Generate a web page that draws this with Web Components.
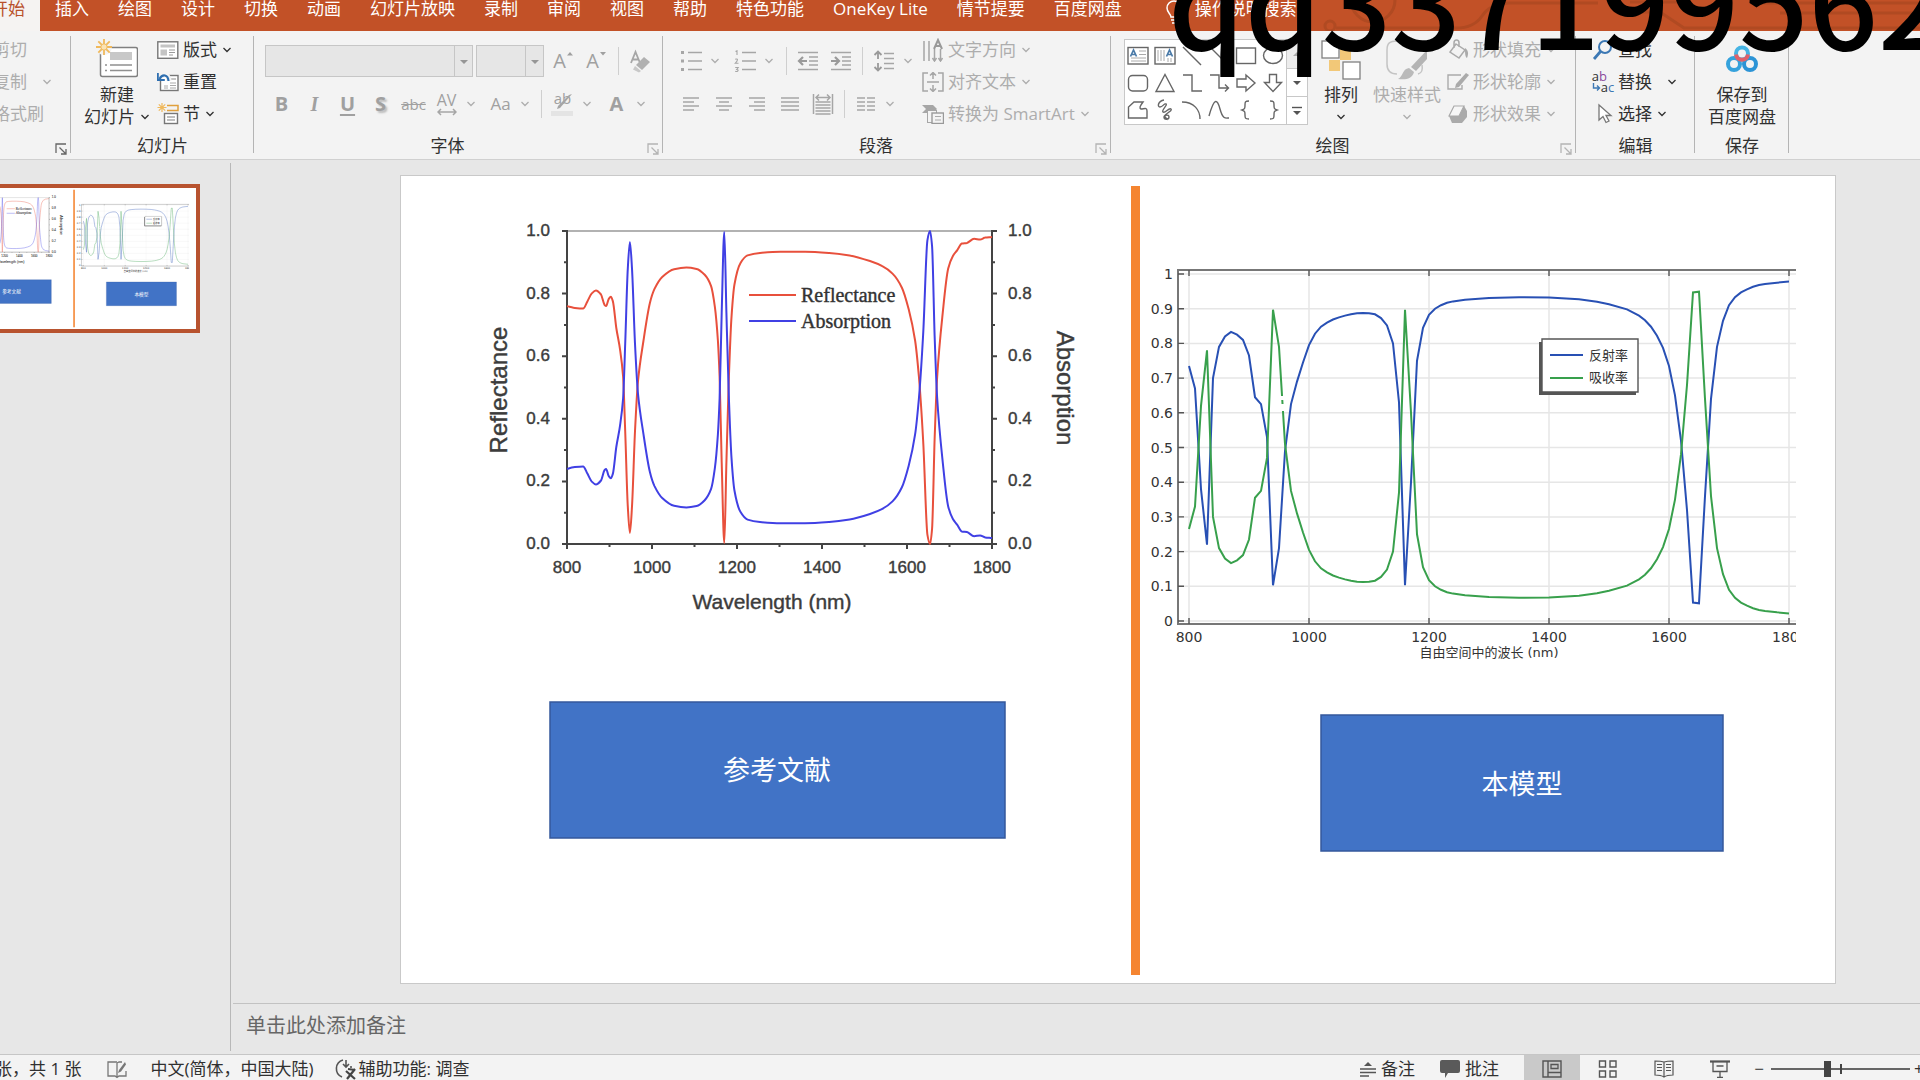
<!DOCTYPE html>
<html lang="zh-CN">
<head>
<meta charset="utf-8">
<title>演示文稿</title>
<style>
  html, body { margin: 0; height: 100%; }
  body {
    overflow: hidden;
    background: #e7e7e7;
    color: #303030;
    font: 17px/22px "Open Sans", "Noto Sans CJK SC", sans-serif;
  }
</style>
</head>
<body>
<slide-editor></slide-editor>

<script>
function define(name, html, setup) {
  const template = document.createElement('template');
  template.innerHTML = html;
  customElements.define(name, class extends HTMLElement {
    constructor() {
      super();
      this.attachShadow({ mode: 'open' }).append(template.content.cloneNode(true));
    }
    connectedCallback() {
      if (setup && !this.ready) { this.ready = true; setup(this, this.shadowRoot); }
    }
  });
}

/* ---------- icons: [width, height, drawing] ---------- */
const G = 'fill="none" stroke="#a6a6a6" stroke-width="1.5"';
const D = 'fill="none" stroke="#666" stroke-width="1.4"';
const icons = {
  chevron: [10, 8, '<path d="M1.5 2 5 5.5 8.500 2" fill="none" stroke="currentColor" stroke-width="1.300"/>'],
  launcher: [12, 12, '<path d="M1 10V1h10M4.500 4.500l6 6M11 6v5H6" fill="none" stroke="currentColor" stroke-width="1.300"/>'],
  newslide: [42, 42, '<rect x="4.500" y="9.500" width="37" height="29" rx="2" fill="#fff" stroke="#808080" stroke-width="1.500"/><rect x="14" y="14" width="22" height="8" fill="#c8c8c8"/><path d="M14 27h22M14 32.500h22M9 27h2M9 32.500h2" stroke="#909090" stroke-width="1.500"/><circle cx="8" cy="9" r="8" fill="#f3f3f3"/><path d="M8 1v16M0 9h16M2.300 3.300l11.400 11.400M13.700 3.300 2.300 14.700" stroke="#f0b95c" stroke-width="1.800"/><circle cx="8" cy="9" r="3.200" fill="#fbe3b4" stroke="#f0b95c"/>'],
  layout: [22, 20, '<rect x=".8" y="1.800" width="20" height="16.500" fill="#fff" stroke="#777" stroke-width="1.400"/><rect x="3.500" y="4.500" width="14.500" height="3" fill="#c4c4c4"/><rect x="3.500" y="9.500" width="6.500" height="6" fill="#c4c4c4"/><path d="M12 10h6M12 12.500h6M12 15h4" stroke="#9a9a9a"/>'],
  reset: [22, 20, '<rect x="3.500" y="3.500" width="17.500" height="15" fill="#fff" stroke="#777" stroke-width="1.400"/><rect x="11" y="6" width="8" height="2" fill="#c4c4c4"/><path d="M7 14h4M7 16h4M13 11h6M13 13.500h6M13 16h6" stroke="#aaa"/><path d="M2 7.500C5 .8 11.500 1.500 12 9" fill="none" stroke="#f3f3f3" stroke-width="5"/><path d="M2.500 7C5.500 1.500 11 2.500 11.500 9" fill="none" stroke="#2f6fb0" stroke-width="2.200"/><path d="M.8 1v7h7" fill="none" stroke="#2f6fb0" stroke-width="2"/>'],
  section: [22, 22, '<path d="M5 0v9M.5 4.500h9M1.800 1.300l6.400 6.400M8.200 1.300 1.800 7.700" stroke="#f0b95c" stroke-width="1.200"/><path d="M10 2.500h11v5H10" fill="none" stroke="#e0a03c" stroke-width="1.500"/><rect x="7.500" y="10.500" width="13" height="10" fill="#fff" stroke="#777" stroke-width="1.400"/><path d="M10 14h8M10 17h8" stroke="#aaa" stroke-width="1.500"/>'],
  bullets: [22, 22, `<path d="M8 2.500h14M8 11h14M8 19.500h14" ${G}/><path d="M1 1h3v3H1zM1 9.500h3v3H1zM1 18h3v3H1z" fill="#a6a6a6"/>`],
  numbers: [22, 22, `<path d="M8 2.500h14M8 11h14M8 19.500h14" ${G}/><path d="M1.500 1.500 3 .8v4.200M1.200 9.300c2.500-1 3.500.3 0 4h3.300M1.200 17.500h3l-1.500 2c2.500 0 1.500 2.800-1.500 1.800" fill="none" stroke="#a6a6a6" stroke-width="1.100"/>`],
  outdent: [22, 20, `<path d="M1 1.500h20M12 6h9M12 10h9M12 14h9M1 18.500h20" ${G}/><path d="M10 10H2M6 6l-4 4 4 4" fill="none" stroke="#9a9a9a" stroke-width="2.200"/>`],
  indent: [22, 20, `<path d="M1 1.500h20M12 6h9M12 10h9M12 14h9M1 18.500h20" ${G}/><path d="M1 10h8M5 6l4 4-4 4" fill="none" stroke="#9a9a9a" stroke-width="2.200"/>`],
  spacing: [22, 22, `<path d="M11 3.500h10M11 8.500h10M11 13.500h10M11 18.500h10" ${G}/><path d="M5 2v7M5 13v7M1.500 5 5 1.500 8.500 5M1.500 17 5 20.500 8.500 17" fill="none" stroke="#9a9a9a" stroke-width="1.800"/>`],
  left: [18, 16, `<path d="M1 2h16M1 6h11M1 10h16M1 14h11" ${G}/>`],
  center: [18, 16, `<path d="M1 2h16M4 6h10M1 10h16M4 14h10" ${G}/>`],
  right: [18, 16, `<path d="M1 2h16M6 6h11M1 10h16M6 14h11" ${G}/>`],
  justify: [20, 16, `<path d="M1 2h18M1 6h18M1 10h18M1 14h18" ${G}/>`],
  distribute: [22, 22, `<path d="M1.500 1v20M20.500 1v20M3.500 9h15M3.500 12h15M3.500 15h15M3.500 18h15M3.500 21h15" ${G}/><path d="M4 4.500h14M7 1.500l-3 3 3 3M15 1.500l3 3-3 3" ${G}/>`],
  columns: [20, 16, `<path d="M1 2h8M11 2h8M1 6h8M11 6h8M1 10h8M11 10h8M1 14h8M11 14h8" ${G}/>`],
  textdir: [22, 24, `<path d="M2 3v20M7 3v20M12.500 11v12M18.500 11v12" ${G}/><path d="M12 11 16 2l4 9M13.500 8h5" fill="none" stroke="#999" stroke-width="2"/><path d="M10.500 20l2 3 2-3M16.500 20l2 3 2-3" ${G}/>`],
  aligntext: [22, 20, `<path d="M6 1H1v18h5M16 1h5v18h-5M5 10h12M11 0v7M11 13v7M8 3.500l3-3 3 3M8 16.500l3 3 3-3" ${G}/>`],
  smartart: [22, 20, `<path d="M0 1h11l4 4-4 4H0l4-4z" fill="#a6a6a6"/><rect x="5.500" y="6.500" width="9" height="12" fill="#f3f3f3" stroke="#a6a6a6"/><rect x="10" y="9" width="11.500" height="10.500" fill="#f3f3f3" stroke="#999" stroke-width="1.400"/><path d="M13 12.500h6M13 16h6" stroke="#aaa"/>`],
  eraser: [22, 24, '<path d="M2 14 6.500 3 11 14M3.500 10.500h6" fill="none" stroke="#a6a6a6" stroke-width="1.800"/><path d="M7 16 15 8l6 5-8 8z" fill="#b0b0b0"/><path d="M6 17l6 5-2 1.500-6-3z" fill="#c8c8c8"/>'],
  highlight: [24, 26, '<path d="M21 3 9 17l-3 1 1-3L18 4z" fill="#a6a6a6"/><rect x="0" y="20" width="22" height="5" fill="#e4e4e4"/>'],
  arrows: [20, 8, `<path d="M1 4h18M4 1 1 4l3 3M16 1l3 3-3 3" ${G}/>`],
  grow: [8, 6, '<path d="M1 4.500 4 1l3 3.500z" fill="#a0a0a0"/>'],
  shrink: [8, 6, '<path d="M1 1h6L4 4.500z" fill="#a0a0a0"/>'],
  bulb: [16, 24, '<path d="M5 17c0-3-4-4.500-4-9a7 7 0 0 1 14 0c0 4.500-4 6-4 9zM5 20h6M6 23h4" fill="none" stroke="#fff" stroke-width="1.500"/>'],
  textbox: [22, 20, `<rect x="1" y="1.500" width="20" height="16.500" ${D}/><path d="M3.500 10.500 6.500 4l3 6.500M4.500 8.500h4" fill="none" stroke="#4a7aa8" stroke-width="1.700"/><path d="M12 5h7M12 8.500h7M4 12h15M4 15h15" stroke="#aaa"/>`],
  vtextbox: [22, 20, `<rect x="1" y="1.500" width="20" height="16.500" ${D}/><path d="M12.500 10.500l3-6.500 3 6.500M13.500 8.500h4" fill="none" stroke="#4a7aa8" stroke-width="1.700"/><path d="M4 4v11M7 4v11M10 4v11M14 12v4M17 12v4" stroke="#aaa"/>`],
  line: [22, 22, `<path d="M2 2l18 18" ${D}/>`],
  arrowline: [22, 22, `<path d="M2 2l18 18M20 13v7h-7" ${D}/>`],
  square: [22, 20, `<rect x="1.500" y="2" width="19" height="15.500" ${D}/>`],
  oval: [22, 20, `<ellipse cx="11" cy="9.500" rx="9.500" ry="8" ${D}/>`],
  rounded: [22, 20, `<rect x="1.500" y="2.500" width="19" height="15.500" rx="4" ${D}/>`],
  triangle: [22, 20, `<path d="M11 1.500 20 18.500H2z" ${D}/>`],
  elbow: [22, 20, `<path d="M2 2h9v16h10" ${D}/>`],
  elbowarrow: [22, 20, `<path d="M2 2h9v13h9M17 11.500l3.500 3.500-3.500 3.500" ${D}/>`],
  rarrow: [22, 20, `<path d="M2 6h9V2l9 8-9 8v-4H2z" ${D}/>`],
  darrow: [22, 20, `<path d="M7.500 1.500h7v8h5L11 18.500 2.500 9.500h5z" ${D}/>`],
  freeform: [22, 20, `<path d="M1.500 18V7L7 2h9c-3 4-4 6-2 7 3 0 6-2 6 2v7z" ${D}/>`],
  scribble: [22, 22, `<path d="M10 1C4 2 3 8 6 8s4-4 6-3-5 6-3 8 6-5 8-3-7 5-7 8 5 3 5 0-5-2-4 0 3 1 2 3" ${D}/>`],
  arc: [22, 20, `<path d="M1 2c12 0 18 8 18 17" ${D}/>`],
  curve: [22, 20, `<path d="M1 16C6-2 9-2 12 9s6 9 9 9" ${D}/>`],
  lbrace: [22, 20, `<path d="M14 1c-4 0-4 1-4 4s0 4-3 5c3 1 3 2 3 5s0 4 4 4" ${D}/>`],
  rbrace: [22, 20, `<path d="M8 1c4 0 4 1 4 4s0 4 3 5c-3 1-3 2-3 5s0 4-4 4" ${D}/>`],
  down: [10, 6, '<path d="M1 1h8L5 5z" fill="#555"/>'],
  up: [10, 6, '<path d="M1 5h8L5 1z" fill="#aaa"/>'],
  more: [10, 10, '<path d="M0 1.500h10" stroke="#555" stroke-width="1.400"/><path d="M1 5h8L5 9z" fill="#555"/>'],
  arrange: [42, 42, '<path d="M20 11h11v11H20zM9 22h11v11H9z" fill="#f2c878"/><rect x="2" y="3" width="17" height="17" fill="#fff" stroke="#808080" stroke-width="1.300"/><rect x="23" y="24" width="17" height="17" fill="#fff" stroke="#808080" stroke-width="1.300"/>'],
  styles: [44, 42, '<path d="M12 36c-7 0-10-4-10-10V12C2 5 5 3 12 3h16c6 0 9 2 10 6" fill="none" stroke="#c4c4c4" stroke-width="1.500"/><path d="M42 12v9L31 33l-5-4z" fill="#b4b4b4"/><path d="M24 30l5 4c-2 7-8 8-16 7 5-2 4-10 11-11z" fill="#bababa"/><path d="M33 36c4-1 5-4 4-9" fill="none" stroke="#c4c4c4" stroke-width="1.500"/>'],
  fill: [22, 22, '<path d="M9 5 18 11l-6 8-9-6zM7 9V4c0-4 5-4 5 0v4" fill="none" stroke="#aaa" stroke-width="1.500"/><path d="M18 9c3 2 4 5 2 10-2-1-2-5-2-10z" fill="#aaa"/>'],
  outline: [22, 20, '<path d="M14 3H1v14h14v-4" fill="none" stroke="#aaa" stroke-width="1.400"/><path d="M19 1l3 2-10 12-4 1 1-4z" fill="#aaa"/>'],
  effects: [22, 20, '<path d="M2 12 7 2h10l3 5v6l-5 6H5z" fill="#aaa"/><path d="M2 12 7 2h10l-5 10z" fill="#f6f6f6" stroke="#aaa" stroke-width="1.200"/>'],
  find: [22, 22, '<circle cx="13" cy="8" r="6" fill="none" stroke="#3c78b4" stroke-width="2"/><path d="M8.500 12.500 2 20" stroke="#3c78b4" stroke-width="2.800"/>'],
  replace: [9, 12, '<path d="M1.500 1v5h6M5 3.500 7.500 6 5 8.500" fill="none" stroke="#3c78b4" stroke-width="1.400"/>'],
  select: [22, 22, '<path d="M7 2v15l4-3.500 3 6 3-1.500-3-5.500h5z" fill="#fff" stroke="#777" stroke-width="1.300"/>'],
  netdisk: [32, 28, '<circle cx="8" cy="19" r="6" fill="none" stroke="#35a2dc" stroke-width="4"/><circle cx="24" cy="19" r="6" fill="none" stroke="#2c94d6" stroke-width="4"/><circle cx="16" cy="8.500" r="6" fill="none" stroke="#46b4e4" stroke-width="4"/><path d="M10 9.500c1 7 11 7 12 0" fill="none" stroke="#e0616a" stroke-width="4"/>'],
  proof: [20, 20, '<path d="M10 4v14M10 3H1v14h7l2 1.500 2-1.500h7v-5M10 4l2-1h3" fill="none" stroke="#777" stroke-width="1.300"/><path d="M18 3 12 11l-1 3 3-1.500 5-7z" fill="#777"/>'],
  access: [22, 22, '<path d="M8 2a9 9 0 0 0-1 17M11 2v6M8 6l3 3 3-3M16 8v2" fill="none" stroke="#555" stroke-width="1.600"/><path d="M11 13l9 8M20 11l-8 10M13 11l7 1" stroke="#444" stroke-width="2.200"/>'],
  notes: [16, 16, '<path d="M4 5h8L8 1z" fill="#555"/><path d="M0 8h16M0 11.500h16M0 15h9" stroke="#555" stroke-width="1.300"/>'],
  comment: [20, 18, '<path d="M2 0h16q2 0 2 2v9q0 2-2 2H8l-3 5v-5H2q-2 0-2-2V2q0-2 2-2z" fill="#5a5a5a"/>'],
  normal: [20, 18, '<path d="M1 1h18v16H1zM6 1v16M6 12.500h13" fill="none" stroke="#555" stroke-width="1.400"/><path d="M9 4.500h7v4H9z" fill="none" stroke="#555" stroke-width="1.300"/>'],
  sorter: [20, 18, '<path d="M1.500 1h6v6h-6zM12 1h6v6h-6zM1.500 11h6v6h-6zM12 11h6v6h-6z" fill="none" stroke="#555" stroke-width="1.400"/>'],
  reading: [20, 18, '<path d="M10 2v15M10 2C7 1 4 1 1 1v14c3 0 6 0 9 2 3-2 6-2 9-2V1c-3 0-6 0-9 1M3 4.500h5M3 7.500h5M3 10.500h5M12 4.500h5M12 7.500h5M12 10.500h5" fill="none" stroke="#555" stroke-width="1.200"/>'],
  show: [20, 18, '<path d="M0 1.500h20" stroke="#555" stroke-width="2.200"/><path d="M3 2v9.500h14V2M6.500 6h7M10 12v5M7 17.500h6" fill="none" stroke="#555" stroke-width="1.300"/>']
};
define('ui-icon', `<style>:host{display:block;flex:none}svg{display:block}</style>`, (el, root) => {
  const [w, h, art] = icons[el.getAttribute('name')];
  root.innerHTML += `<svg width="${w}" height="${h}" viewBox="0 0 ${w} ${h}" aria-hidden="true">${art}</svg>`;
});

/* ---------- title tabs ---------- */
define('ribbon-tabs', `
<style>
  :host { display: block; background: #c25127; height: 31px; overflow: hidden; position: relative; }
  .decor { position: absolute; right: 0; top: 0; }
  nav { display: flex; position: relative; }
  button { border: 0; background: none; color: #fff; font: inherit; line-height: 18px; height: 31px; padding: 0 0 13px; margin: 0 0 0 29px; white-space: nowrap; flex: none; }
  .on { background: #f5f3f2; color: #b9512b; margin: 0 -14px 0 -24px; padding: 0 15px 13px; }
  .ask { display: flex; gap: 13px; margin-left: 44px; }
</style>
<svg class="decor" width="620" height="31" fill="none" stroke="#b04a22" stroke-width="3" aria-hidden="true">
  <circle cx="73" cy="0" r="22"/><circle cx="30" cy="26" r="5"/><path d="M36 28h120q18 0 26-12t26-13h90M330 2h60M330 12h30l24 16h236M460 3h160M480 13h140"/>
</svg>
<nav>
  <button class="on">开始</button><button>插入</button><button>绘图</button><button>设计</button><button>切换</button><button>动画</button><button>幻灯片放映</button><button>录制</button><button>审阅</button><button>视图</button><button>帮助</button><button>特色功能</button><button>OneKey Lite</button><button>情节提要</button><button>百度网盘</button><button class="ask"><ui-icon name="bulb"></ui-icon>操作说明搜索</button>
</nav>`);

/* ---------- ribbon pieces ---------- */
define('ribbon-group', `
<style>
  :host { display: flex; flex-direction: column; flex: none; box-sizing: border-box; height: 128px; padding-top: 3px;
    background: linear-gradient(#b4b4b4, #b4b4b4) right 5px / 1px 117px no-repeat; }
  .body { flex: 1; display: flex; align-items: flex-start; padding-left: var(--lead, 10px); }
  footer { display: flex; align-items: center; height: 26px; }
  span { flex: 1; text-align: center; white-space: nowrap; }
  button { border: 0; background: none; padding: 5px 4px 0 6px; color: #666; }
  button:disabled { color: #b4b4b4; }
</style>
<div class="body"><slot></slot></div>
<footer><span></span></footer>`, (el, root) => {
  root.querySelector('span').textContent = el.getAttribute('label');
  const launch = el.getAttribute('launcher');
  if (launch !== null) {
    const b = document.createElement('button');
    b.disabled = launch === 'off';
    b.setAttribute('aria-label', '更多选项');
    b.innerHTML = '<ui-icon name="launcher"></ui-icon>';
    root.querySelector('footer').append(b);
  }
});

/* icon left, label right, 32px row */
define('tool-row', `
<style>
  :host { display: block; }
  button { display: flex; align-items: center; gap: 4px; height: 32px; padding: 0; border: 0; background: none; font: inherit; color: #303030; white-space: nowrap; }
  :host([off]) button { color: #adadad; }
  .pic { width: 22px; display: flex; justify-content: center; }
  .pic:empty { display: none; }
  .chev { margin-left: 1px; }
  :host([wide]) .chev { margin-left: 11px; }
</style>
<button><span class="pic"></span><slot></slot></button>`, (el, root) => {
  const b = root.querySelector('button'), n = el.getAttribute('icon');
  b.disabled = el.hasAttribute('off');
  if (n === 'replace') root.querySelector('.pic').innerHTML = '<replace-mark></replace-mark>';
  else if (n) root.querySelector('.pic').innerHTML = `<ui-icon name="${n}"></ui-icon>`;
  if (el.hasAttribute('menu')) b.insertAdjacentHTML('beforeend', '<ui-icon class="chev" name="chevron"></ui-icon>');
});
define('replace-mark', `
<style>
  :host { display: grid; font-size: 13px; line-height: 11px; }
  b { font-weight: 400; color: #8a4a9c; } i { font-style: normal; color: #3c78b4; }
  div { display: flex; }
</style>
<div>a<b>b</b></div><div><ui-icon name="replace"></ui-icon>a<i>c</i></div>`);

/* large icon over one or two label lines */
define('tool-big', `
<style>
  :host { display: block; }
  button { display: flex; flex-direction: column; align-items: center; min-width: 52px; padding: 0; border: 0; background: none; font: inherit; color: #303030; white-space: nowrap; }
  :host([off]) button { color: #adadad; }
  .pic { height: 50px; display: flex; align-items: center; }
  .line { display: flex; align-items: center; min-height: 22px; gap: 5px; }
</style>
<button><span class="pic"></span><span class="line"><slot></slot></span><span class="line second"></span></button>`, (el, root) => {
  root.querySelector('button').disabled = el.hasAttribute('off');
  root.querySelector('.pic').innerHTML = `<ui-icon name="${el.getAttribute('icon')}"></ui-icon>`;
  root.querySelector('.second').innerHTML = (el.getAttribute('second') || '') +
    (el.hasAttribute('menu') ? '<ui-icon name="chevron"></ui-icon>' : '');
});

/* compact, disabled button with only a glyph or icon */
define('tool-glyph', `
<style>
  :host { display: flex; flex: none; }
  button { width: 33px; height: 32px; padding: 0; border: 0; background: none; display: grid; place-content: center; justify-items: center; color: #a0a0a0; font: 20px/20px "Open Sans", sans-serif; }
  .chev { width: 16px; display: grid; place-content: center; color: #adadad; }
</style>
<button disabled><slot></slot></button>`, (el, root) => {
  const n = el.getAttribute('icon');
  if (n) root.querySelector('button').innerHTML = `<ui-icon name="${n}"></ui-icon>`;
  root.querySelector('button').setAttribute('aria-label', el.title || el.getAttribute('name') || '');
  if (el.hasAttribute('menu')) root.innerHTML += '<span class="chev"><ui-icon name="chevron"></ui-icon></span>';
});

define('tool-combo', `
<style>
  :host { display: block; flex: none; position: relative; }
  select { appearance: none; width: 100%; height: 32px; border: 1px solid #c6c6c6; border-radius: 0; opacity: 1;
    background: linear-gradient(#c6c6c6, #c6c6c6) right 17px top / 1px 100% no-repeat, #e6e6e6; }
  ui-icon { position: absolute; right: 4px; top: 14px; opacity: .55; }
</style>
<select disabled aria-label="字体设置"></select><ui-icon name="down"></ui-icon>`);

define('shape-gallery', `
<style>
  :host { display: flex; width: 184px; height: 86px; box-sizing: border-box; margin-top: 5px; border: 1px solid #c8c8c8; background: #fff; flex: none; }
  .grid { flex: 1; display: grid; grid-template: repeat(3, 1fr) / repeat(6, 1fr); padding-top: 2px; }
  .grid button, .bar button { border: 0; background: none; padding: 0; display: grid; place-content: center; }
  .bar { width: 20px; border-left: 1px solid #c8c8c8; display: grid; grid-template-rows: 28px 1fr 1fr; }
  .bar button + button { border-top: 1px solid #c8c8c8; }
  .bar button:first-child { background: #ececec; }
</style>
<div class="grid"></div>
<div class="bar"><button aria-label="向上"><ui-icon name="up"></ui-icon></button><button aria-label="向下"><ui-icon name="down"></ui-icon></button><button aria-label="其他"><ui-icon name="more"></ui-icon></button></div>`,
(el, root) => {
  root.querySelector('.grid').innerHTML = ['textbox', 'vtextbox', 'line', 'arrowline', 'square', 'oval', 'rounded', 'triangle', 'elbow', 'elbowarrow', 'rarrow', 'darrow', 'freeform', 'scribble', 'arc', 'curve', 'lbrace', 'rbrace']
    .map(n => `<button aria-label="${n}"><ui-icon name="${n}"></ui-icon></button>`).join('');
});

define('ribbon-bar', `
<style>
  :host { display: flex; background: #f3f3f3; border-bottom: 1px solid #d0d0d0; }
  .rows { display: flex; flex-direction: column; gap: 11px; padding-top: 11px; }
  .row { display: flex; height: 32px; }
  .rule { width: 1px; background: #cfcfcf; margin: 2px 4px 2px 5px; flex: none; }
  .g1 { width: 71px; --lead: 0px; } .g1 .col { margin-left: -7px; }
  .g2 { width: 183px; --lead: 13px; } .g2 .col { margin-left: 7px; }
  .g3 { width: 409px; --lead: 11px; }
  .g4 { width: 448px; --lead: 11px; } .g4 .rows { width: 248px; }
  .g5 { width: 465px; --lead: 13px; } .g5 .col, .g5 tool-big + tool-big { margin-left: 6px; } .g5 shape-gallery { margin-right: 7px; }
  .g6 { width: 119px; --lead: 16px; }
  .g7 { width: 94px; --lead: 13px; }
  s { color: #a0a0a0; font-size: 15px; } u { text-underline-offset: 3px; }
  .av { font-size: 16px; line-height: 16px; } .sm { font-size: 17px; }
  .shadow { text-shadow: 2px 2px 2px #bbb; }
  .size { display: flex; align-items: flex-start; }
  .hl { display: grid; } .hl > * { grid-area: 1 / 1; } .hl span { font-size: 15px; line-height: 14px; }
</style>
<ribbon-group class="g1" label="" launcher>
  <div class="col"><tool-row off>剪切</tool-row><tool-row off menu wide>复制</tool-row><tool-row off>格式刷</tool-row></div>
</ribbon-group>
<ribbon-group class="g2" label="幻灯片">
  <tool-big icon="newslide" second="幻灯片" menu>新建</tool-big>
  <div class="col"><tool-row icon="layout" menu>版式</tool-row><tool-row icon="reset">重置</tool-row><tool-row icon="section" menu>节</tool-row></div>
</ribbon-group>
<ribbon-group class="g3" label="字体" launcher="off">
  <div class="rows">
    <div class="row"><tool-combo style="width:208px;margin-right:3px"></tool-combo><tool-combo style="width:68px;margin-right:3px"></tool-combo>
      <tool-glyph name="增大字号"><span class="size">A<ui-icon name="grow"></ui-icon></span></tool-glyph><tool-glyph name="减小字号"><span class="size">A<ui-icon name="shrink"></ui-icon></span></tool-glyph><i class="rule"></i><tool-glyph icon="eraser"></tool-glyph></div>
    <div class="row"><tool-glyph><b>B</b></tool-glyph><tool-glyph><b><i style="font-family:'Liberation Serif'">I</i></b></tool-glyph><tool-glyph><b><u>U</u></b></tool-glyph><tool-glyph><b class="shadow">S</b></tool-glyph><tool-glyph><s>abc</s></tool-glyph><tool-glyph menu><span class="av">AV</span><ui-icon name="arrows"></ui-icon></tool-glyph>
      <tool-glyph menu style="margin-left:5px"><span class="sm">Aa</span></tool-glyph><i class="rule" style="margin-left:8px"></i><tool-glyph menu><span class="hl"><span>ab</span><ui-icon name="highlight"></ui-icon></span></tool-glyph><tool-glyph menu style="margin-left:5px"><b>A</b></tool-glyph></div>
  </div>
</ribbon-group>
<ribbon-group class="g4" label="段落" launcher="off">
  <div class="rows">
    <div class="row"><tool-glyph icon="bullets" menu></tool-glyph><tool-glyph icon="numbers" menu style="margin-left:5px"></tool-glyph><i class="rule" style="margin-left:9px"></i><tool-glyph icon="outdent"></tool-glyph><tool-glyph icon="indent"></tool-glyph><i class="rule"></i><tool-glyph icon="spacing" menu></tool-glyph></div>
    <div class="row"><tool-glyph icon="left"></tool-glyph><tool-glyph icon="center"></tool-glyph><tool-glyph icon="right"></tool-glyph><tool-glyph icon="justify"></tool-glyph><tool-glyph icon="distribute"></tool-glyph><i class="rule"></i><tool-glyph icon="columns" menu></tool-glyph></div>
  </div>
  <div class="col"><tool-row off icon="textdir" menu>文字方向</tool-row><tool-row off icon="aligntext" menu>对齐文本</tool-row><tool-row off icon="smartart" menu>转换为 SmartArt</tool-row></div>
</ribbon-group>
<ribbon-group class="g5" label="绘图" launcher="off">
  <shape-gallery></shape-gallery>
  <tool-big icon="arrange" menu>排列</tool-big><tool-big off icon="styles" menu>快速样式</tool-big>
  <div class="col"><tool-row off icon="fill" menu>形状填充</tool-row><tool-row off icon="outline" menu>形状轮廓</tool-row><tool-row off icon="effects" menu>形状效果</tool-row></div>
</ribbon-group>
<ribbon-group class="g6" label="编辑">
  <div class="col"><tool-row icon="find">查找</tool-row><tool-row icon="replace" menu wide>替换</tool-row><tool-row icon="select" menu>选择</tool-row></div>
</ribbon-group>
<ribbon-group class="g7" label="保存"><tool-big icon="netdisk" second="百度网盘">保存到</tool-big></ribbon-group>`);

/* ---------- slide artwork ---------- */
const refData = [[800,.76],[815,.755],[838,.752],[848,.775],[858,.8],[868,.81],[880,.797],[888,.765],[892,.76],[898,.782],[903,.79],[908,.775],[916,.69],[925,.62],[932,.535],[937,.36],[943,.12],[948,.035],[953,.12],[960,.36],[967,.52],[980,.65],[995,.77],[1006,.815],[1024,.853],[1052,.878],[1081,.883],[1105,.879],[1124,.86],[1139,.824],[1148,.757],[1155,.65],[1159,.535],[1164,.26],[1170,.003],[1175,.26],[1181,.535],[1187,.725],[1194,.83],[1208,.897],[1225,.922],[1254,.93],[1302,.934],[1360,.934],[1417,.93],[1465,.922],[1513,.904],[1542,.888],[1566,.864],[1588,.819],[1604,.75],[1619,.65],[1628,.535],[1638,.333],[1648,.03],[1654,0],[1659,.05],[1665,.333],[1671,.535],[1683,.725],[1697,.88],[1708,.92],[1718,.938],[1729,.96],[1741,.962],[1758,.975],[1772,.973],[1784,.979],[1800,.981]];
const modelData = [[800,.735],[810,.67],[820,.38],[830,.22],[840,.7],[850,.79],[860,.82],[870,.833],[880,.825],[890,.81],[900,.765],[910,.645],[920,.625],[930,.53],[940,.103],[950,.21],[960,.49],[970,.625],[980,.69],[990,.745],[1000,.795],[1010,.828],[1020,.848],[1030,.86],[1040,.869],[1050,.875],[1060,.88],[1070,.884],[1080,.887],[1090,.888],[1100,.887],[1110,.884],[1120,.873],[1130,.852],[1140,.8],[1150,.63],[1160,.103],[1170,.4],[1180,.75],[1190,.845],[1200,.882],[1210,.9],[1220,.91],[1230,.917],[1240,.921],[1260,.926],[1300,.931],[1350,.933],[1400,.932],[1450,.927],[1480,.92],[1500,.913],[1530,.898],[1550,.88],[1560,.867],[1570,.848],[1580,.822],[1590,.787],[1600,.735],[1610,.65],[1620,.52],[1630,.32],[1640,.053],[1650,.051],[1660,.36],[1670,.64],[1680,.79],[1690,.865],[1700,.91],[1710,.933],[1720,.947],[1730,.956],[1740,.963],[1750,.968],[1760,.971],[1780,.975],[1800,.978]];
const straight = p => 'M' + p.map(q => q.map(v => v.toFixed(1)).join(' ')).join('L');
/* monotone cubic interpolation keeps the resonance peaks free of overshoot */
function smooth(p) {
  const s = p.slice(1).map((q, i) => (q[1] - p[i][1]) / (q[0] - p[i][0]));
  const m = p.map((q, i) => i === 0 ? s[0] : i === p.length - 1 ? s[i - 1] : s[i - 1] * s[i] <= 0 ? 0 : 2 * s[i - 1] * s[i] / (s[i - 1] + s[i]));
  let d = `M${p[0][0]} ${p[0][1]}`;
  for (let i = 1; i < p.length; i++) {
    const h = (p[i][0] - p[i - 1][0]) / 3;
    d += `C${[p[i-1][0] + h, p[i-1][1] + m[i-1] * h, p[i][0] - h, p[i][1] - m[i] * h, p[i][0], p[i][1]].map(v => v.toFixed(1)).join(' ')}`;
  }
  return d;
}
const range = (a, b, step) => { const r = []; for (let v = a; v <= b; v += step) r.push(v); return r; };

function referenceChart() {
  const X = l => 567 + (l - 800) * .425, Y = v => 544 - v * 313;
  let out = `<path d="M567 231H992" stroke="#999" stroke-width="1.500"/>`;
  let ticks = 'M567 230V544H992V230';
  for (const i of range(0, 10, 1)) { const t = i % 2 ? 3 : 5; ticks += `M${567 - t} ${Y(i / 10)}h${t}M992 ${Y(i / 10)}h${t}`; }
  for (const l of range(800, 1800, 100)) ticks += `M${X(l)} 544v${l % 200 ? 3 : 5}`;
  out += `<path d="${ticks}" fill="none" stroke="#444" stroke-width="2"/>`;
  const pts = f => refData.map(([l, v]) => [X(l), Y(f(v))]);
  out += `<path d="${smooth(pts(v => v))}" fill="none" stroke="#e8503c" stroke-width="2"/><path d="${smooth(pts(v => 1 - v))}" fill="none" stroke="#4040e4" stroke-width="2"/>`;
  out += '<g font-family="Liberation Sans, sans-serif" font-size="17" fill="#3c3c3c" stroke="#3c3c3c" stroke-width=".4">';
  for (const i of range(0, 10, 2)) {
    const t = (i / 10).toFixed(1), y = Y(i / 10) + 5;
    out += `<text x="550" y="${y}" text-anchor="end">${t}</text><text x="1008" y="${y}">${t}</text>`;
  }
  for (const l of range(800, 1800, 200)) out += `<text x="${X(l)}" y="573" text-anchor="middle">${l}</text>`;
  out += `<text x="772" y="609" font-size="21" text-anchor="middle">Wavelength (nm)</text>
    <text transform="translate(507 390) rotate(-90)" font-size="24" text-anchor="middle">Reflectance</text>
    <text transform="translate(1057 388) rotate(90)" font-size="24" text-anchor="middle">Absorption</text></g>
    <path d="M749 295h47" stroke="#e8503c" stroke-width="2"/><path d="M749 321h47" stroke="#4040e4" stroke-width="2"/>
    <g font-family="Liberation Serif, serif" font-size="20" fill="#333" stroke="#333" stroke-width=".4"><text x="801" y="302">Reflectance</text><text x="801" y="328">Absorption</text></g>`;
  return out;
}
function modelChart() {
  const X = l => 1189 + (l - 800) * .6, Y = v => 621 - v * 347;
  let grid = '', ticks = '', labels = '';
  for (const i of range(0, 10, 1)) {
    grid += `M1178 ${Y(i / 10)}H1796`; ticks += `M1178 ${Y(i / 10)}h6`;
    labels += `<text x="1173" y="${Y(i / 10) + 5}" text-anchor="end">${i === 10 ? 1 : i ? '0.' + i : 0}</text>`;
  }
  for (const l of range(800, 1800, 200)) {
    grid += `M${X(l)} 270V624`; ticks += `M${X(l)} 270v6M${X(l)} 624v-6`;
    if (l < 1800) labels += `<text x="${X(l)}" y="642" text-anchor="middle">${l}</text>`;
  }
  const pts = f => modelData.map(([l, v]) => [X(l), Y(f(v))]);
  return `<svg x="1140" y="260" width="656" height="410" viewBox="1140 260 656 410">
    <path d="${grid}" stroke="#e6e6e6" stroke-width="1.500"/><path d="M1796 270H1178V624H1796" fill="none" stroke="#777" stroke-width="2"/><path d="${ticks}" stroke="#555" stroke-width="1.400"/>
    <path d="${straight(pts(v => v))}" fill="none" stroke="#2850b4" stroke-width="2"/><path d="${straight(pts(v => 1 - v))}" fill="none" stroke="#38a04c" stroke-width="2"/>
    <path d="M1283 396v4M1283 404v7" stroke="#fff" stroke-width="4"/>
    <path d="M1539 342h97v53h-97z" fill="#555"/><path d="M1542 339h96v53h-96z" fill="#fff" stroke="#555" stroke-width="1.400"/>
    <path d="M1550 355h33" stroke="#2850b4" stroke-width="2"/><path d="M1550 378h33" stroke="#38a04c" stroke-width="2"/>
    <g font-family="DejaVu Sans, Noto Sans CJK SC, sans-serif" fill="#333"><g font-size="14">${labels}<text x="1772" y="642">180</text></g>
    <g font-size="13"><text x="1489" y="657" text-anchor="middle">自由空间中的波长 (nm)</text><text x="1589" y="360">反射率</text><text x="1589" y="382">吸收率</text></g></g></svg>`;
}
define('slide-art', `<style>:host{display:block;background:#fff}.art{display:block;width:100%;height:auto}</style>`, (el, root) => {
  root.innerHTML += `<svg class="art" viewBox="401 176 1434 807" role="img" aria-label="幻灯片 1">${referenceChart()}${modelChart()}
    <path d="M1131 186h9v789h-9z" fill="#f58531"/>
    <g fill="#4173c6" stroke="#34589c" stroke-width="1.500"><path d="M550 702h455v136H550zM1321 715h402v136h-402z"/></g>
    <g font-family="Noto Sans CJK SC, sans-serif" font-size="27" fill="#fff" text-anchor="middle"><text x="777" y="780">参考文献</text><text x="1522" y="794">本模型</text></g></svg>`;
});

define('slide-thumbnails', `
<style>
  :host { display: block; width: 230px; flex: none; margin: 3px 0; border-right: 1px solid #b8b8b8; overflow: hidden; }
  button { display: block; width: 258px; margin: 21px 0 0 -58px; padding: 0; border: 4px solid #b8532f; background: none; }
</style>
<button aria-label="幻灯片 1"><slide-art></slide-art></button>`);

define('slide-stage', `
<style>
  :host { display: block; flex: 1; padding: 15px 84px 0 169px; }
  slide-art { border: 1px solid #c9c9c9; }
</style>
<slide-art></slide-art>`);

define('notes-pane', `
<style>
  :host { display: block; margin-left: 2px; border-top: 1px solid #c2c2c2; }
  textarea { display: block; box-sizing: border-box; width: 100%; height: 50px; border: 0; outline: 0; resize: none; background: none; overflow: hidden;
    padding: 8px 13px; color: #666; font: 20px/28px "Open Sans", "Noto Sans CJK SC", sans-serif; }
</style>
<textarea aria-label="备注">单击此处添加备注</textarea>`);

define('status-bar', `
<style>
  :host { display: flex; height: 25px; border-top: 1px solid #c6c6c6; background: #f3f3f3; overflow: hidden; flex: none; white-space: nowrap; }
  .side, button { display: flex; align-items: center; }
  .side { height: 28px; }
  button { font: inherit; color: inherit; border: 0; background: none; padding: 0; height: 28px; gap: 5px; }
  .end { margin-left: auto; }
  .view { width: 56px; justify-content: center; }
  .on { background: #c9c9c9; }
  input { appearance: none; width: 139px; height: 20px; margin: 0 4px 0 5px; background: linear-gradient(#444, #444) center / 2px 10px no-repeat, linear-gradient(#666, #666) center / 100% 2px no-repeat; }
  input::-webkit-slider-thumb { appearance: none; width: 7px; height: 16px; background: #444; }
  .step { width: 14px; justify-content: center; }
</style>
<div class="side"><span style="margin-left:-5px">张，共 1 张</span><button aria-label="拼写检查" style="margin-left:25px"><ui-icon name="proof"></ui-icon></button>
<button style="margin-left:24px">中文(简体，中国大陆)</button><button style="margin-left:21px;gap:2px"><ui-icon name="access"></ui-icon>辅助功能: 调查</button></div>
<div class="side end"><button><ui-icon name="notes"></ui-icon>备注</button><button style="margin:0 25px"><ui-icon name="comment"></ui-icon>批注</button>
<button class="view on" aria-label="普通视图"><ui-icon name="normal"></ui-icon></button><button class="view" aria-label="幻灯片浏览"><ui-icon name="sorter"></ui-icon></button><button class="view" aria-label="阅读视图"><ui-icon name="reading"></ui-icon></button><button class="view" aria-label="幻灯片放映"><ui-icon name="show"></ui-icon></button>
<button class="step" style="margin-left:4px">−</button><input type="range" min="0" max="100" value="40" aria-label="缩放"><button style="width:6px">+</button></div>`);

define('contact-overlay', `
<style>
  :host { position: fixed; top: -64px; right: 0; width: 752px; overflow: hidden; pointer-events: none; color: #000; white-space: nowrap;
    font: 500 122px/122px "Noto Sans CJK SC", sans-serif; padding-bottom: 20px; }
</style><slot></slot>`);

define('slide-editor', `
<style>
  :host { display: flex; flex-direction: column; height: 100vh; overflow: hidden; }
  main { flex: 1; display: flex; min-height: 0; }
  .work { flex: 1; display: flex; flex-direction: column; min-width: 0; }
</style>
<ribbon-tabs></ribbon-tabs>
<ribbon-bar></ribbon-bar>
<main><slide-thumbnails></slide-thumbnails><div class="work"><slide-stage></slide-stage><notes-pane></notes-pane></div></main>
<status-bar></status-bar>
<contact-overlay>qq337199562</contact-overlay>`);
</script>
</body>
</html>
